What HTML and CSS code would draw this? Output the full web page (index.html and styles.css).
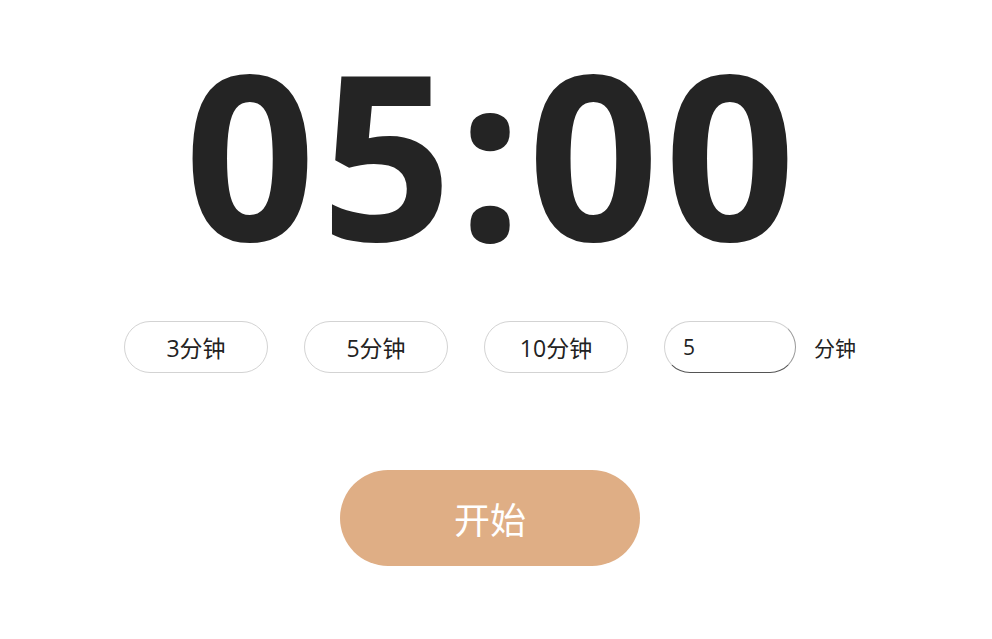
FILE: index.html
```html
<!DOCTYPE html>
<html lang="zh-CN">
<head>
<meta charset="utf-8">
<title>计时器</title>
<link rel="stylesheet" href="styles.css">
</head>
<body>
<main class="app">
  <div class="time">05:00</div>
  <div class="presets">
    <button class="preset">3分钟</button>
    <button class="preset">5分钟</button>
    <button class="preset">10分钟</button>
    <input class="custom" type="text" value="5">
    <span class="unit">分钟</span>
  </div>
  <button class="start">开始</button>
</main>
</body>
</html>
```
FILE: styles.css
```css
html, body {
  margin: 0;
  padding: 0;
  background: #ffffff;
}
body {
  font-family: "Open Sans", "Noto Sans CJK SC", sans-serif;
  color: #222222;
}
.app {
  width: 980px;
  display: flex;
  flex-direction: column;
  align-items: center;
}
.time {
  margin-top: 2px;
  padding: 0 20px 0 25px;
  font-size: 230px;
  font-weight: 700;
  line-height: 1.3;
  color: #242424;
  letter-spacing: 5px;
  white-space: nowrap;
}
.presets {
  margin-top: 20px;
  display: flex;
  align-items: center;
  gap: 36px;
}
.preset {
  width: 144px;
  height: 52px;
  border: 1px solid #d3d3d3;
  border-radius: 26px;
  background: #ffffff;
  font-family: "Open Sans", "Noto Sans CJK SC", sans-serif;
  font-size: 23px;
  color: #222222;
  padding: 0;
}
.custom {
  box-sizing: border-box;
  width: 132px;
  height: 52px;
  border: 1px solid #d3d3d3;
  border-bottom-color: #555555;
  border-right-color: #9a9a9a;
  border-radius: 26px;
  padding: 0 0 0 18px;
  font-family: "Open Sans", "Noto Sans CJK SC", sans-serif;
  font-size: 21px;
  color: #222222;
  outline: none;
}
.unit {
  margin-left: -18px;
  font-size: 21px;
  color: #222222;
}
.start {
  margin-top: 97px;
  width: 300px;
  height: 96px;
  border: none;
  border-radius: 48px;
  background: #dfae85;
  color: #ffffff;
  font-family: "Open Sans", "Noto Sans CJK SC", sans-serif;
  font-size: 36px;
  padding: 0;
}
```
